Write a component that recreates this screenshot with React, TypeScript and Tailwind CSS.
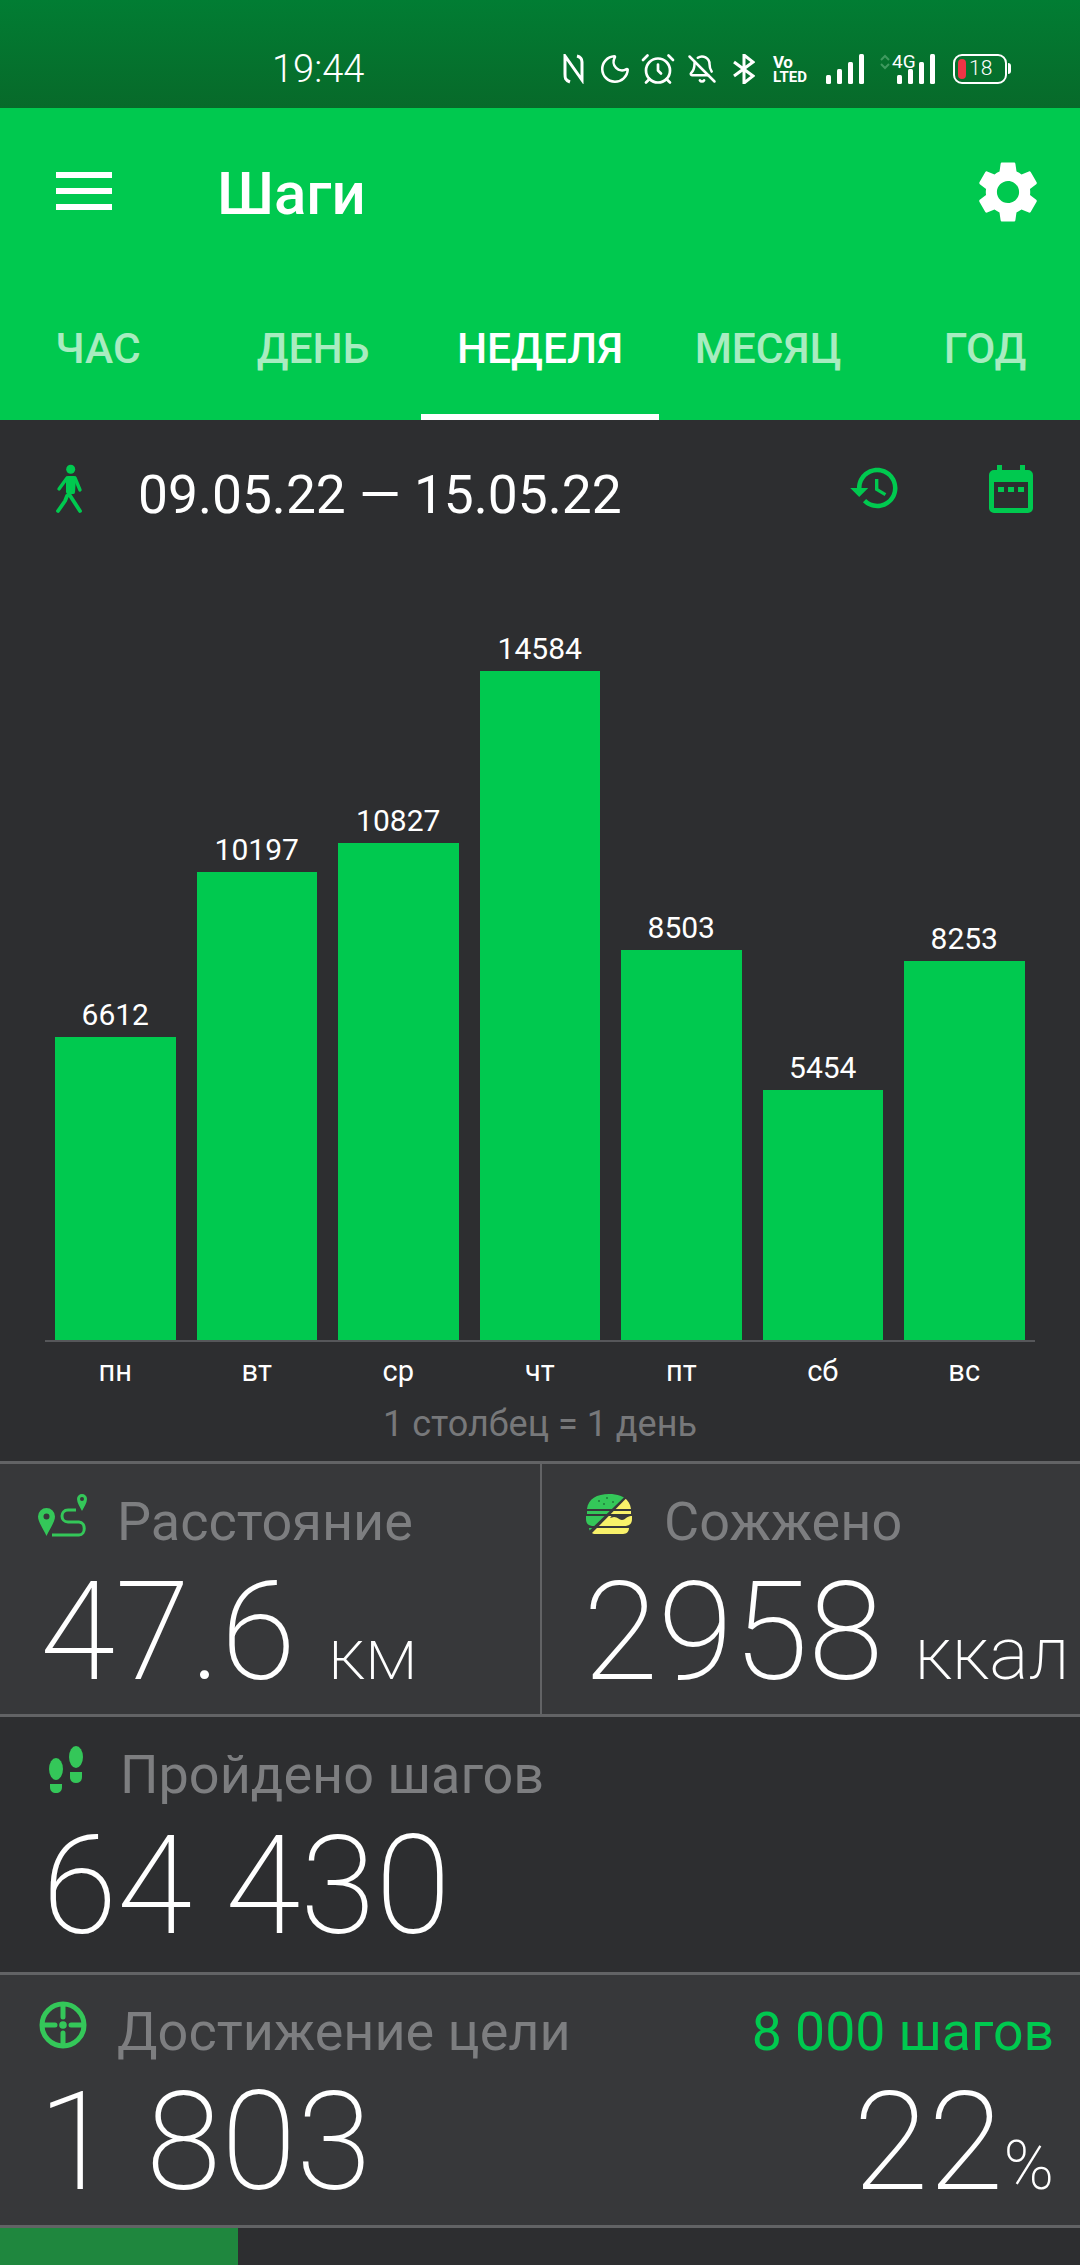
import { Moon, AlarmClock, BellOff } from 'lucide-react';

const bars = [
  { day: 'пн', steps: 6612 },
  { day: 'вт', steps: 10197 },
  { day: 'ср', steps: 10827 },
  { day: 'чт', steps: 14584 },
  { day: 'пт', steps: 8503 },
  { day: 'сб', steps: 5454 },
  { day: 'вс', steps: 8253 },
];

function Signal({ className }: { className?: string }) {
  return (
    <svg width="38" height="30" viewBox="0 0 38 30" className={className} fill="#fff">
      <rect x="0" y="21" width="5" height="9" rx="1.5" />
      <rect x="11" y="15" width="5" height="15" rx="1.5" />
      <rect x="22" y="8" width="5" height="22" rx="1.5" />
      <rect x="33" y="0" width="5" height="30" rx="1.5" />
    </svg>
  );
}

function StatusBar() {
  return (
    <div className="h-[108px] bg-gradient-to-b from-[#017d33] to-[#076a2a] flex items-center text-white shrink-0">
      <div className="ml-[272px] w-[291px] text-[38px] font-light leading-none mt-[29px]">19:44</div>
      <div className="flex items-center mt-[29px]">
        <svg width="21" height="30" viewBox="0 0 21 30" fill="none" stroke="#fff" strokeWidth="3">
          <path d="M7 28 C2 26 2 24 2 20 V2 L19 26 V8 C19 5 18 3 14 2" />
        </svg>
        <Moon size={34} strokeWidth={1.8} className="ml-[14px]" />
        <AlarmClock size={36} strokeWidth={1.8} className="ml-[8px]" />
        <BellOff size={30} strokeWidth={2} className="ml-[11px]" />
        <svg width="22" height="30" viewBox="0 0 22 30" fill="none" stroke="#fff" strokeWidth="3" className="ml-[16px]">
          <path d="M1 8 L20 22 L11 29 V1 L20 8 L1 22" />
        </svg>
        <div className="ml-[18px] w-[35px] font-bold">
          <div className="text-[17px] leading-[16px] tracking-[-0.5px]">Vo</div>
          <div className="text-[15px] leading-[14px]">LTED</div>
        </div>
        <Signal className="ml-[18px]" />
        <div className="relative ml-[15px] w-[18px] h-[30px]">
          <svg width="12" height="16" viewBox="0 0 12 16" className="absolute left-0 top-0" fill="none" stroke="#3f9a5f" strokeWidth="2">
            <path d="M2 6 L6 2 L10 6 M2 10 L6 14 L10 10" />
          </svg>
        </div>
        <div className="relative w-[38px] h-[30px]">
          <span className="absolute left-[-5px] top-[-2px] text-[19px] leading-none">4G</span>
          <Signal />
        </div>
        <div className="ml-[18px] flex items-center">
          <div className="w-[54px] h-[30px] border-2 border-white rounded-[9px] flex items-center pl-[3px]">
            <div className="w-[8px] h-[20px] bg-[#ee3445] rounded-[4px]" />
            <span className="ml-[3px] text-[21px] font-light leading-none">18</span>
          </div>
          <div className="ml-[1px] w-[3px] h-[11px] bg-white rounded-r-sm" />
        </div>
      </div>
    </div>
  );
}

function AppHeader() {
  return (
    <div className="h-[312px] bg-[#00c94f] text-white shrink-0 flex flex-col">
      <div className="h-[192px] flex items-center pb-[20px]">
        <div className="ml-[56px] w-[56px] mb-[6px] flex flex-col gap-[10px]">
          <div className="h-[6px] bg-white" />
          <div className="h-[6px] bg-white" />
          <div className="h-[6px] bg-white" />
        </div>
        <div className="ml-[105px] text-[60px] font-medium leading-none">Шаги</div>
        <svg width="74" height="74" viewBox="0 0 24 24" fill="#fff" className="ml-auto mr-[35px] mb-[4px]">
          <path d="M19.14 12.94c.04-.3.06-.61.06-.94 0-.32-.02-.64-.07-.94l2.03-1.58c.18-.14.23-.41.12-.61l-1.92-3.32c-.12-.22-.37-.29-.59-.22l-2.39.96c-.5-.38-1.03-.7-1.62-.94l-.36-2.54c-.04-.24-.24-.41-.48-.41h-3.84c-.24 0-.43.17-.47.41l-.36 2.54c-.59.24-1.13.57-1.62.94l-2.39-.96c-.22-.08-.47 0-.59.22L2.74 8.87c-.12.21-.08.47.12.61l2.03 1.58c-.05.3-.09.63-.09.94s.02.64.07.94l-2.03 1.58c-.18.14-.23.41-.12.61l1.92 3.32c.12.22.37.29.59.22l2.39-.96c.5.38 1.03.7 1.62.94l.36 2.54c.05.24.24.41.48.41h3.84c.24 0 .44-.17.47-.41l.36-2.54c.59-.24 1.13-.56 1.62-.94l2.39.96c.22.08.47 0 .59-.22l1.92-3.32c.12-.22.07-.47-.12-.61l-2.01-1.58zM12 15.6c-1.98 0-3.6-1.62-3.6-3.6s1.62-3.6 3.6-3.6 3.6 1.62 3.6 3.6-1.62 3.6-3.6 3.6z" />
        </svg>
      </div>
      <div className="h-[120px] flex text-[42.5px] font-medium text-[#a8ecc0] whitespace-nowrap overflow-hidden">
        <div className="w-[196px] shrink-0 text-center pt-[20px] leading-[58px]">ЧАС</div>
        <div className="ml-[9px] w-[216px] shrink-0 text-center pt-[20px] leading-[58px]">ДЕНЬ</div>
        <div className="w-[238px] shrink-0 text-center pt-[20px] leading-[58px] text-white border-b-[6px] border-white">НЕДЕЛЯ</div>
        <div className="w-[218px] shrink-0 text-center pt-[20px] leading-[58px]">МЕСЯЦ</div>
        <div className="w-[216px] shrink-0 text-center pt-[20px] leading-[58px]">ГОД</div>
      </div>
    </div>
  );
}

function DateRow() {
  return (
    <div className="h-[150px] flex items-start shrink-0">
      <svg width="30" height="50" viewBox="0 0 30 50" className="ml-[54px] mt-[44px]" fill="none" stroke="#00c94f" strokeLinecap="round" strokeLinejoin="round">
        <circle cx="16.7" cy="5.3" r="4.5" fill="#00c94f" stroke="none" />
        <path d="M14 14 L20 14 L19 28 L14 28 Z" fill="#00c94f" strokeWidth="4" />
        <path d="M13 14 L5 25 M21 14 L26 26" strokeWidth="3.4" />
        <path d="M15 30 L26 47 M13 32 L11 37 L4 47" strokeWidth="3.8" />
      </svg>
      <div className="ml-[54px] mt-[42px] text-[53.3px] leading-[66px] text-white">09.05.22 — 15.05.22</div>
      <svg width="54" height="54" viewBox="0 0 24 24" fill="#00c94f" className="ml-auto mt-[41px]">
        <path d="M13 3c-4.97 0-9 4.03-9 9H1l3.89 3.89.07.14L9 12H6c0-3.87 3.13-7 7-7s7 3.13 7 7-3.13 7-7 7c-1.93 0-3.68-.79-4.94-2.06l-1.42 1.42C8.27 19.99 10.51 21 13 21c4.97 0 9-4.03 9-9s-4.03-9-9-9zm-1 5v5l4.28 2.54.72-1.21-3.5-2.08V8H12z" />
      </svg>
      <svg width="44" height="48" viewBox="0 0 44 48" fill="#00c94f" fillRule="evenodd" className="ml-[87px] mr-[47px] mt-[45px]">
        <path d="M8 0h5v5h18V0h5v5h3a5 5 0 0 1 5 5v33a5 5 0 0 1-5 5H5a5 5 0 0 1-5-5V10a5 5 0 0 1 5-5h3zM5 17v26h34V17z" />
        <rect x="9" y="22" width="6" height="5" />
        <rect x="19" y="22" width="6" height="5" />
        <rect x="29" y="22" width="6" height="5" />
      </svg>
    </div>
  );
}

function Chart() {
  return (
    <div className="h-[891px] flex flex-col shrink-0">
      <div className="h-[772px] flex items-end mx-[45px] border-b-2 border-[#56575a] px-[10px] gap-[21px]">
        {bars.map(b => (
          <div key={b.day} className="w-[120.5px] flex flex-col items-center">
            <div className="text-[30px] leading-[36px] mb-[4px] text-white">{b.steps}</div>
            <div className="w-full bg-[#00c94f]" style={{ height: Math.round(b.steps * 0.0459) }} />
          </div>
        ))}
      </div>
      <div className="flex mx-[45px] px-[10px] gap-[21px] mt-[10px]">
        {bars.map(b => (
          <div key={b.day} className="w-[120.5px] text-center text-[29px] leading-[38px] text-white">{b.day}</div>
        ))}
      </div>
      <div className="text-center text-[36px] leading-[44px] text-[#77787a] mt-[12px]">1 столбец = 1 день</div>
    </div>
  );
}

function DistanceIcon() {
  return (
    <svg width="50" height="44" viewBox="0 0 50 44" fill="none">
      <path fillRule="evenodd" fill="#34c759" d="M8.500 14a8.500 8.500 0 0 1 8.500 8.500C17 28 11.500 35 8.500 42 5.500 35 0 28 0 22.500A8.500 8.500 0 0 1 8.500 14zm0 5.500a3 3 0 1 0 0 6 3 3 0 0 0 0-6z" />
      <path fillRule="evenodd" fill="#34c759" d="M44 0a5 5 0 0 1 5 5C49 9 46 13 44 17 42 13 39 9 39 5A5 5 0 0 1 44 0zm0 3a2 2 0 1 0 0 4 2 2 0 0 0 0-4z" />
      <path d="M38 16H30C22 16 22 28 30 28H41C48 28 48 41 41 41H14" stroke="#34c759" strokeWidth="3" />
    </svg>
  );
}

function BurgerIcon() {
  const shape = 'M1 15C2 5 11 0 23 0S44 5 45 15ZM1 17H45V20H1ZM0 22H46V25C46 30 43 32 38 32H8C3 32 0 30 0 25ZM3 34H43C43 37 41 40 37 40H9C6 40 3 37 3 34Z';
  return (
    <svg width="46" height="40" viewBox="0 0 46 40">
      <defs>
        <clipPath id="burger-left"><path d="M0 0H41.500L2 38H0Z" /></clipPath>
        <clipPath id="burger-right"><path d="M46 0H44.500L5 40H46Z" /></clipPath>
      </defs>
      <g clipPath="url(#burger-left)">
        <path fill="#34c759" d={shape} />
        <g fill="#1f7a3a">
          <circle cx="13" cy="7" r="1" />
          <circle cx="21" cy="4" r="1" />
          <circle cx="27" cy="8" r="1" />
          <circle cx="18" cy="10" r="1" />
        </g>
      </g>
      <g clipPath="url(#burger-right)">
        <path fill="#f8f16a" d={shape} />
        <path fill="#37383a" d="M27 20H45V22C41 22 39 26 36 26S32 23 28 23L24 24Z" />
      </g>
    </svg>
  );
}

function StepsIcon() {
  return (
    <svg width="34" height="48" viewBox="0 0 34 48" fill="#34c759">
      <ellipse cx="7" cy="23" rx="7" ry="11" />
      <path d="M1 38H13V41C13 45 10.500 47 7 47S1 45 1 41Z" />
      <ellipse cx="27" cy="11" rx="7" ry="11" />
      <path d="M21 26H33V31C33 35 30.500 37 27 37S21 35 21 31Z" />
    </svg>
  );
}

function TargetIcon() {
  return (
    <svg width="48" height="48" viewBox="0 0 48 48" fill="none" stroke="#34c759" strokeWidth="5">
      <circle cx="24" cy="24" r="21" />
      <path d="M24 5v11M24 32v11M5 24h11M32 24h11" strokeLinecap="round" />
      <circle cx="24" cy="24" r="3.800" fill="#34c759" stroke="none" />
    </svg>
  );
}

function StatLabel({ children }: { children: React.ReactNode }) {
  return <div className="text-[54px] leading-[60px] text-[#7d7e80] whitespace-nowrap">{children}</div>;
}

function BigValue({ children }: { children: React.ReactNode }) {
  return <div className="text-[136.5px] font-extralight leading-[130px] text-white whitespace-nowrap">{children}</div>;
}

function Stats() {
  return (
    <div className="flex flex-col flex-1">
      <div className="h-[253px] flex bg-[#37383a] border-t-[3px] border-[#626365] shrink-0">
        <div className="w-[542px] border-r-2 border-[#626365] shrink-0 pl-[38px] pt-[30px]">
          <div className="flex items-start">
            <DistanceIcon />
            <div className="ml-[29px] -mt-[2px]"><StatLabel>Расстояние</StatLabel></div>
          </div>
          <div className="flex items-baseline ml-[2px] mt-[15px]">
            <BigValue>47.6</BigValue>
            <span className="ml-[32px] text-[73px] font-extralight text-white leading-none">км</span>
          </div>
        </div>
        <div className="flex-1 pl-[44px] pt-[30px] overflow-hidden">
          <div className="flex items-start">
            <BurgerIcon />
            <div className="ml-[32px] -mt-[2px]"><StatLabel>Сожжено</StatLabel></div>
          </div>
          <div className="flex items-baseline -ml-[3px] mt-[15px]">
            <BigValue>2958</BigValue>
            <span className="ml-[31px] text-[74px] font-extralight text-white leading-none">ккал</span>
          </div>
        </div>
      </div>
      <div className="h-[258px] bg-[#2d2e30] border-t-[3px] border-[#626365] pl-[49px] pt-[29px] shrink-0">
        <div className="flex items-start">
          <StepsIcon />
          <div className="ml-[37px] -mt-[1px]"><StatLabel>Пройдено шагов</StatLabel></div>
        </div>
        <div className="mt-[16px] -ml-[7px]"><BigValue>64 430</BigValue></div>
      </div>
      <div className="h-[253px] bg-[#37383a] border-t-[3px] border-[#626365] pl-[39px] pr-[26px] pt-[26px] shrink-0">
        <div className="flex items-start">
          <TargetIcon />
          <div className="ml-[30px] mt-[1px]"><StatLabel>Достижение цели</StatLabel></div>
          <div className="ml-auto mt-[1px] text-[53.5px] leading-[60px] text-[#00c94f] whitespace-nowrap">8 000 шагов</div>
        </div>
        <div className="flex items-baseline justify-between mt-[15px]">
          <div className="ml-[-1px]"><BigValue>1 803</BigValue></div>
          <div className="flex items-baseline">
            <BigValue>22</BigValue>
            <span className="text-[68px] font-extralight text-white leading-none">%</span>
          </div>
        </div>
      </div>
      <div className="h-[40px] bg-[#2d2e30] border-t-[3px] border-[#626365] shrink-0">
        <div className="h-full w-[238px] bg-[#1f873e]" />
      </div>
    </div>
  );
}

export default function App() {
  return (
    <div className="w-[1080px] h-[2265px] overflow-hidden bg-[#2d2e30] flex flex-col font-['Roboto',sans-serif]">
      <StatusBar />
      <AppHeader />
      <DateRow />
      <Chart />
      <Stats />
    </div>
  );
}
